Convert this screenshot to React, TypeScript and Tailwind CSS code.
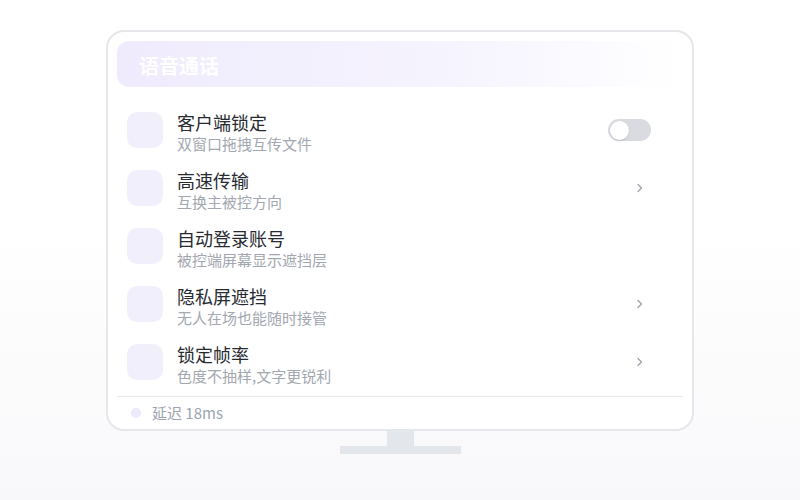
import React from 'react';

type Row = {
  title: string;
  desc: string;
  action: 'toggle' | 'chevron' | 'none';
};

const rows: Row[] = [
  { title: '客户端锁定', desc: '双窗口拖拽互传文件', action: 'toggle' },
  { title: '高速传输', desc: '互换主被控方向', action: 'chevron' },
  { title: '自动登录账号', desc: '被控端屏幕显示遮挡层', action: 'none' },
  { title: '隐私屏遮挡', desc: '无人在场也能随时接管', action: 'chevron' },
  { title: '锁定帧率', desc: '色度不抽样,文字更锐利', action: 'chevron' },
];

function Chevron() {
  return (
    <svg width="6" height="10" viewBox="0 0 6 10" className="mr-[40px]">
      <path d="M1 1.5L4.5 5L1 8.5" fill="none" stroke="#9ca3af" strokeWidth="1.3" strokeLinecap="round" strokeLinejoin="round" />
    </svg>
  );
}

function Toggle() {
  return (
    <div className="mr-[32px] flex h-[22px] w-[43px] items-center rounded-full bg-[#d9dbe1] px-[2px]">
      <div className="h-[19px] w-[19px] rounded-full bg-white shadow-[0_1px_2px_rgba(0,0,0,0.15)]" />
    </div>
  );
}

export default function App() {
  return (
    <div
      className="flex h-[500px] w-[800px] flex-col items-center bg-gradient-to-b from-white from-45% to-[#f8f8fa] pt-[30px]"
      style={{ fontFamily: '"Noto Sans CJK SC", "Noto Sans", sans-serif' }}
    >
      {/* Monitor screen */}
      <div className="flex h-[401px] w-[588px] flex-col rounded-[18px] border-2 border-[#e6e7eb] bg-white p-[9px]">
        {/* Header */}
        <div className="flex h-[46px] shrink-0 items-center rounded-[12px] bg-gradient-to-r from-[#efebfd] via-[#f6f4fe] via-60% to-white pl-[22px] pt-[4px]">
          <span className="text-[20px] font-bold leading-none text-white">语音通话</span>
        </div>

        {/* Rows */}
        <div className="mt-[14px] flex flex-col">
          {rows.map((row) => (
            <div key={row.title} className="flex h-[58px] items-start">
              <div className="ml-[10px] mt-[11px] h-[36px] w-[36px] shrink-0 rounded-[10px] bg-[#f2effd]" />
              <div className="ml-[14px] mt-[10px] flex flex-col">
                <span className="text-[18px] leading-[22px] text-[#272a30]">{row.title}</span>
                <span className="mt-px text-[15px] leading-[20px] text-[#a3a7af]">{row.desc}</span>
              </div>
              <div className="ml-auto flex h-full items-center">
                {row.action === 'toggle' && <Toggle />}
                {row.action === 'chevron' && <Chevron />}
              </div>
            </div>
          ))}
        </div>

        {/* Divider + footer */}
        <div className="mt-[5px] h-px shrink-0 bg-[#e8eaee]" />
        <div className="flex items-center pl-[14px] pt-[6px]">
          <div className="h-[10px] w-[10px] rounded-full bg-[#eceafb]" />
          <span className="ml-[11px] text-[15px] leading-[20px] text-[#9ca3af]">延迟 18ms</span>
        </div>
      </div>

      {/* Stand */}
      <div className="h-[15px] w-[27px] bg-[#e3e6ea]" />
      <div className="h-[8px] w-[121px] bg-[#e3e6ea]" />
    </div>
  );
}
